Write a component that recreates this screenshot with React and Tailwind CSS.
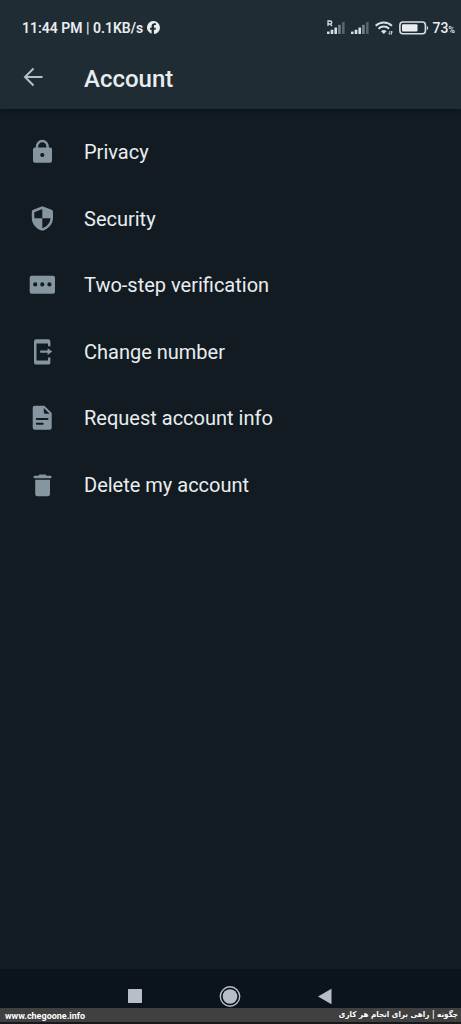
const ITEMS = [
  { label: "Privacy", Icon: LockIcon },
  { label: "Security", Icon: ShieldIcon },
  { label: "Two-step verification", Icon: PinIcon },
  { label: "Change number", Icon: ChangeNumberIcon },
  { label: "Request account info", Icon: DocumentIcon },
  { label: "Delete my account", Icon: TrashIcon },
];

function MenuIcon({ children }) {
  return (
    <svg className="size-7 shrink-0 text-[#8696a0]" viewBox="0 0 28 28" fill="currentColor" aria-hidden="true">
      {children}
    </svg>
  );
}

function LockIcon() {
  return (
    <MenuIcon>
      <path d="M9 10V8.6a5.3 5.6 0 0 1 10.6 0V10" fill="none" stroke="currentColor" strokeWidth="2.4" />
      <path
        fillRule="evenodd"
        d="M7 9.4h15a2 2 0 0 1 2 2v11.4a2 2 0 0 1-2 2H7a2 2 0 0 1-2-2V11.4a2 2 0 0 1 2-2Zm7.3 5.5a2.1 2.1 0 1 0 0 4.2 2.1 2.1 0 0 0 0-4.2Z"
      />
    </MenuIcon>
  );
}

function ShieldIcon() {
  return (
    <MenuIcon>
      <path
        fillRule="evenodd"
        d="M14.3 1.3 23.6 4.8Q25 5.4 25 6.8V13C25 19 20.4 24.2 14.3 25.7 8.2 24.2 3.8 19 3.8 13V6.8Q3.8 5.4 5.2 4.8ZM14.3 4 6.3 7.2V13.2H14.3ZM14.3 13.2V23.2C18.8 21.8 22.1 18 22.5 13.2Z"
      />
    </MenuIcon>
  );
}

function PinIcon() {
  return (
    <MenuIcon>
      <path
        fillRule="evenodd"
        d="M3.7 4.8H25a2 2 0 0 1 2 2v14a2 2 0 0 1-2 2H3.7a2 2 0 0 1-2-2v-14a2 2 0 0 1 2-2ZM7.2 11.3a2.1 2.1 0 1 0 0 4.2 2.1 2.1 0 0 0 0-4.2Zm7.1 0a2.1 2.1 0 1 0 0 4.2 2.1 2.1 0 0 0 0-4.2Zm7.1 0a2.1 2.1 0 1 0 0 4.2 2.1 2.1 0 0 0 0-4.2Z"
      />
    </MenuIcon>
  );
}

function ChangeNumberIcon() {
  return (
    <MenuIcon>
      <path d="M8.2 1.3H20.2a2.2 2.2 0 0 1 2.2 2.2V8.2H20V5.5H8.5V22.5H20V19.6H22.4V24.4a2.2 2.2 0 0 1-2.2 2.2H8.2A2.2 2.2 0 0 1 6 24.4V3.5A2.2 2.2 0 0 1 8.2 1.3Z" />
      <path d="M12.2 12.5H19.6V10.2L24.2 13.6 19.6 17V14.7H12.2Z" />
    </MenuIcon>
  );
}

function DocumentIcon() {
  return (
    <MenuIcon>
      <path
        fillRule="evenodd"
        d="M6.7 1.8H16.4L23.7 9V23.7a2 2 0 0 1-2 2H6.7a2 2 0 0 1-2-2V3.8a2 2 0 0 1 2-2ZM15.8 4V8.2a1.5 1.5 0 0 0 1.5 1.5H21.6ZM8.8 14a1 1 0 0 0 0 2H19.5a1 1 0 0 0 0-2ZM8.8 18.8a1 1 0 0 0 0 2H14.7a1 1 0 0 0 0-2Z"
      />
    </MenuIcon>
  );
}

function TrashIcon() {
  return (
    <MenuIcon>
      <path d="M11.5 3.5H17.5L18.7 4.7H22.3a1.3 1.3 0 0 1 0 2.6H6.8a1.3 1.3 0 0 1 0-2.6H10.3Z" />
      <path d="M7.2 8.8H22V23a2.2 2.2 0 0 1-2.2 2.2H9.4A2.2 2.2 0 0 1 7.2 23Z" />
    </MenuIcon>
  );
}

function SignalIcon({ roaming }) {
  return (
    <svg className="h-4 w-[18px]" viewBox="0 0 18 16" fill="#d9dee1" aria-hidden="true">
      {roaming && <path d="M1 6V1H3.3a1.5 1.5 0 0 1 0 3H1M3.2 4 5 6" fill="none" stroke="#d9dee1" strokeWidth="1.3" />}
      <rect x="0" y="11.5" width="2.6" height="2.5" rx="0.5" />
      <rect x="3.7" y="9.8" width="2.6" height="4.2" rx="0.5" />
      <rect x="7.4" y="7.5" width="2.6" height="6.5" rx="0.5" />
      <rect x="11.1" y="4.8" width="2.6" height="9.2" rx="0.5" fill="#77828a" />
      <rect x="15" y="2" width="2.6" height="12" rx="0.5" fill="#59656c" />
    </svg>
  );
}

function WifiIcon() {
  return (
    <svg className="h-4 w-[18px]" viewBox="0 0 18 16" fill="none" stroke="#d9dee1" strokeWidth="2" aria-hidden="true">
      <path d="M0.7 5.8a11.5 11.5 0 0 1 16.2 0M3.5 8.7a7.6 7.6 0 0 1 10.6 0" />
      <path d="M6 11.3a4 4 0 0 1 5.6 0L8.8 14Z" fill="#d9dee1" stroke="none" />
      <path d="M14.8 11v3.5M13.5 13l1.3 1.5M16.5 14.5V11l1.2 1.5" strokeWidth="0.9" />
    </svg>
  );
}

function BatteryIcon() {
  return (
    <svg className="h-4 w-[30px]" viewBox="0 0 30 16" aria-hidden="true">
      <rect x="0.9" y="2" width="25.5" height="11.8" rx="3" fill="none" stroke="#d9dee1" strokeWidth="1.6" />
      <rect x="3" y="4.2" width="15.5" height="7.4" rx="1" fill="#e9edef" />
      <path d="M27.8 5.8a2.5 2.5 0 0 1 0 4.4Z" fill="#d9dee1" />
    </svg>
  );
}

function FacebookIcon() {
  return (
    <svg className="ml-1 size-[13px]" viewBox="0 0 24 24" fill="#e9edef" aria-hidden="true">
      <path d="M24 12a12 12 0 1 0-15.5 11.5v-7.2H5.5V12.5h3V9.6c0-3.6 2.1-5.5 5.3-5.5 1.3 0 2.7.2 2.7.2v3.2h-1.6c-1.6 0-2.1 1-2.1 2v3h3.6l-.6 3.8h-3V24A12 12 0 0 0 24 12Z" />
    </svg>
  );
}

function StatusBar() {
  return (
    <div className="flex h-[46px] items-center pt-[9px] pr-[6px] pl-[22px] text-[#e9edef]">
      <span className="text-sm font-semibold">11:44 PM | 0.1KB/s</span>
      <FacebookIcon />
      <div className="ml-auto flex items-center">
        <div className="flex items-center gap-[6px]">
          <SignalIcon roaming />
          <SignalIcon />
          <WifiIcon />
          <BatteryIcon />
        </div>
        <span className="ml-[3px] text-sm font-medium">
          73<span className="text-[9px]">%</span>
        </span>
      </div>
    </div>
  );
}

export default function App() {
  return (
    <div className="flex min-h-screen flex-col bg-[#121b22] font-['Roboto',sans-serif] text-[#e9edef]">
      <header className="bg-[#1f2c34] shadow-[0_1px_4px_rgba(0,0,0,0.35)]">
        <StatusBar />
        <div className="flex h-[63px] items-center pl-[19px]">
          <button type="button" aria-label="Back" className="flex size-7 items-center justify-center">
            <svg className="size-7" viewBox="0 0 28 28" fill="none" stroke="#b9bec4" strokeWidth="2" aria-hidden="true">
              <path d="M23.5 13H6M14.5 4.5 6 13l8.5 8.5" />
            </svg>
          </button>
          <h1 className="pt-[2px] pl-[37px] text-2xl font-medium">Account</h1>
        </div>
      </header>

      <main className="flex-1 pt-[10px]">
        <ul className="grid h-[399px] grid-rows-6">
          {ITEMS.map(({ label, Icon }) => (
            <li key={label} className="flex">
              <button type="button" className="flex w-full items-center gap-[28px] pl-7 text-left text-[20px]">
                <Icon />
                {label}
              </button>
            </li>
          ))}
        </ul>
      </main>

      <nav aria-label="System" className="flex h-[39px] items-end justify-center bg-[#0b141a] pr-[2px]">
        <button type="button" aria-label="Recent apps" className="flex w-[95px] justify-center">
          <svg className="size-6" viewBox="0 0 24 24" fill="#b9bdc7" aria-hidden="true">
            <rect x="5" y="5" width="14" height="14" rx="0.5" />
          </svg>
        </button>
        <button type="button" aria-label="Home" className="flex w-[95px] justify-center">
          <svg className="size-6" viewBox="0 0 24 24" fill="#b9bdc7" aria-hidden="true">
            <circle cx="12" cy="12.5" r="9.7" fill="none" stroke="#b9bdc7" strokeWidth="1.4" />
            <circle cx="12" cy="12.5" r="7.3" />
          </svg>
        </button>
        <button type="button" aria-label="Back" className="flex w-[95px] justify-center">
          <svg className="size-6" viewBox="0 0 24 24" fill="#b9bdc7" aria-hidden="true">
            <path d="M18.5 4.8V20.2L5 12.5Z" />
          </svg>
        </button>
      </nav>

      <footer className="flex h-4 items-center justify-between border-b-2 border-[#15181c] bg-[#404040] pr-[3px] pl-[5px] leading-[14px] font-bold text-white">
        <a href="#site" className="pt-[2px] text-[9px]">www.chegoone.info</a>
        <p dir="rtl" lang="fa" className="font-['DejaVu_Sans_Condensed','DejaVu_Sans',sans-serif] text-[8px]">
          چگونه | راهی برای انجام هر کاری
        </p>
      </footer>
    </div>
  );
}
